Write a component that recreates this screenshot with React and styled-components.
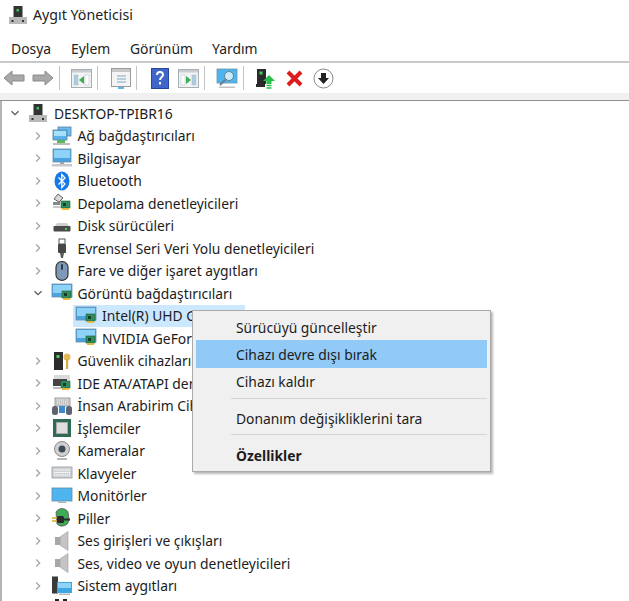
import React from "react";
import styled, { createGlobalStyle } from "styled-components";

const Global = createGlobalStyle`
  html, body { margin: 0; padding: 0; background: #fff; }
  body { font-family: "Noto Sans", "Open Sans", Arial, sans-serif; color: #1a1a1a; }
`;

const Page = styled.div`
  position: relative; width: 629px; height: 601px; overflow: hidden; background: #fff;
`;
const TitleBar = styled.div`
  display: flex; align-items: center; gap: 6px; height: 29px; padding: 0 0 1px 9px; box-sizing: content-box;
  font-size: 14.2px; color: #222;
`;
const MenuBar = styled.nav`
  display: flex; height: 33px; align-items: center; padding: 6px 0 0 11px; box-sizing: border-box;
  border-bottom: 2px solid #c9c9c9; font-size: 13.9px; color: #222;
`;
const MenuItem = styled.span` width: ${p => p.$w}px; `;
const Toolbar = styled.div`
  display: flex; align-items: center; height: 30px; background: #fff;
`;
const ToolButton = styled.div`
  width: 28.8px; height: 26px; display: flex; align-items: center; justify-content: center;
`;
const ToolSep = styled.div`
  width: 1px; height: 24px; background: #c4c4c4; margin: 0 8px 0 1px;
`;
const Strip = styled.div`
  height: 7px; background: #f0f0f0; border-bottom: 1px solid #8f8f8f;
`;
const Tree = styled.div`
  border-left: 2px solid #b5b5b5; padding-top: 1px; height: 510px;
`;
const Row = styled.div`
  display: flex; align-items: center; height: 22.5px; font-size: 13.85px; color: #1c1c1c; white-space: nowrap;
  padding-left: ${p => 4 + p.$depth * 23.5}px;
`;
const Toggle = styled.span`
  width: 17px; height: 16px; display: flex; align-items: center; justify-content: center; flex: none;
`;
const RowIcon = styled.span`
  width: 22px; margin: 0 5px 0 4px; height: 20px; display: flex; align-items: center; justify-content: center; flex: none;
`;
const ChildRow = styled.div`
  display: flex; align-items: center; height: 22.5px; font-size: 13.85px; white-space: nowrap; color: #1c1c1c;
  margin-left: 71px; width: 172px; gap: 5px; padding-left: 2px; box-sizing: border-box; width: 172px;
  background: ${p => (p.$selected ? "#cce8ff" : "transparent")};
`;
const ContextMenu = styled.div`
  position: absolute; left: 192px; top: 310px; width: 299px; height: 162px; box-sizing: border-box;
  background: #f0f0f0; border: 1px solid #a9a9a9; box-shadow: 2px 2px 2px rgba(0,0,0,.28);
  padding: 3px; font-size: 13.85px; color: #1c1c1c;
`;
const MenuRow = styled.div`
  height: ${p => p.$h}px; display: flex; align-items: center; padding-left: 40px;
  font-weight: ${p => (p.$bold ? 700 : 400)};
  background: ${p => (p.$active ? "#91c9f7" : "transparent")};
`;
const MenuSep = styled.div`
  height: 1px; margin: 3px 0 6px 35px; background: #d4d4d4;
`;

const Chevron = ({ open }) => (
  <svg width="10" height="10" viewBox="0 0 10 10" fill="none" stroke={open ? "#5a5a5a" : "#a6a6a6"} strokeWidth="1.3">
    {open ? <path d="M1.5 3.2 5 6.7 8.5 3.2" /> : <path d="M3.2 1.5 6.7 5 3.2 8.5" />}
  </svg>
);

const Svg = ({ children, w = 22, h = 20, vb = "0 0 22 20" }) => (
  <svg width={w} height={h} viewBox={vb}>{children}</svg>
);

const Tower = ({ w = 18, h = 18 }) => (
  <Svg w={w} h={h} vb="1 1 18 18">
    <rect x="5.5" y="1" width="9" height="12" fill="#333" />
    <rect x="8.5" y="4" width="2.5" height="2.5" fill="#3dc15c" />
    <rect x="1" y="12" width="18" height="7" fill="#b9b9b9" />
    <rect x="3.5" y="15" width="2" height="2" fill="#333" />
    <rect x="14" y="15" width="2" height="2" fill="#333" />
  </Svg>
);
const Screen = ({ x = 1, y = 1, w = 18, h = 12 }) => (
  <>
    <rect x={x} y={y} width={w} height={h} fill="#4aa2e0" stroke="#6d8fa8" strokeWidth=".8" />
    <rect x={x + 1} y={y + 1} width={w - 2} height={h - 5} fill="#8ed2f8" />
  </>
);
const Card = ({ x = 10, y = 9 }) => (
  <>
    <rect x={x} y={y} width="9" height="7" fill="#2f8f5b" stroke="#1c5d3c" strokeWidth=".6" />
    <rect x={x + 2} y={y + 2} width="3" height="3" fill="#1a3b2b" />
    <rect x={x + 1} y={y + 7} width="7" height="2" fill="#e9b73c" />
  </>
);
const NetIcon = () => (
  <Svg>
    <rect x="7" y="1" width="13" height="9" fill="#6bbdf0" stroke="#57809e" strokeWidth=".8" />
    <rect x="2" y="4" width="14" height="10" fill="#59b3ea" stroke="#57809e" strokeWidth=".8" />
    <rect x="3" y="5" width="12" height="5" fill="#a6e1fb" />
    <rect x="6" y="14" width="8" height="3" fill="#58b85a" />
    <rect x="2" y="17" width="17" height="2" fill="#bcbcbc" />
  </Svg>
);
const PcIcon = () => (
  <Svg>
    <Screen x={2} y={1} w={18} h={13} />
    <rect x="9" y="14" width="4" height="2" fill="#9ba6ad" />
    <rect x="1" y="16" width="20" height="2.5" fill="#c9c9c9" />
  </Svg>
);
const BtIcon = () => (
  <Svg>
    <ellipse cx="11" cy="10" rx="7.5" ry="9.5" fill="#1679ea" />
    <path d="M7.5 6.5 14 13l-3.2 3.5v-13L14 7 7.5 13.5" fill="none" stroke="#fff" strokeWidth="1.3" />
  </Svg>
);
const StorageIcon = () => (
  <Svg>
    <path d="M7 1 12 5 8 9 3 6z" fill="#d8d8d8" stroke="#666" strokeWidth="1" />
    <rect x="2" y="9" width="7" height="3" fill="#888" />
    <Card x={10} y={8} />
    <rect x="2" y="13" width="7" height="2" fill="#c9c9c9" />
  </Svg>
);
const DiskIcon = () => (
  <Svg>
    <path d="M4 10 6 7h10l2 3z" fill="#cfcfcf" />
    <rect x="2.5" y="10" width="17" height="5.5" rx="1" fill="#4a4a4a" />
    <rect x="14" y="12" width="2" height="2" fill="#46c75a" />
  </Svg>
);
const UsbIcon = () => (
  <Svg>
    <rect x="8" y="1" width="6" height="5" fill="#fff" stroke="#555" />
    <rect x="7" y="6" width="8" height="9" rx="1" fill="#474747" />
    <path d="M9 15h4l-1 5h-2z" fill="#5a5a5a" />
  </Svg>
);
const MouseIcon = () => (
  <Svg>
    <rect x="5" y="0.7" width="12" height="18.6" rx="5.5" fill="#7f9ab8" stroke="#333" strokeWidth="1.2" />
    <rect x="10" y="3" width="2" height="6" rx="1" fill="#2f3e4f" />
  </Svg>
);
const DisplayIcon = () => (
  <Svg>
    <Screen x={1} y={1} w={20} h={13} />
    <Card x={11} y={8} />
  </Svg>
);
const SecIcon = () => (
  <Svg>
    <rect x="3" y="1" width="9" height="18" fill="#2b2b2b" />
    <rect x="5.5" y="4" width="3" height="3" fill="#49d05f" />
    <circle cx="16" cy="6" r="3.5" fill="#e1b95a" />
    <rect x="15" y="8" width="2.2" height="10" fill="#d6aa47" />
  </Svg>
);
const IdeIcon = () => (
  <Svg>
    <rect x="3" y="2" width="16" height="5" fill="#dadada" />
    <rect x="2" y="6" width="14" height="7" fill="#444" />
    <Card x={10} y={8} />
    <rect x="2" y="14" width="8" height="2" fill="#bbb" />
  </Svg>
);
const HidIcon = () => (
  <Svg>
    <rect x="4" y="2" width="15" height="8" fill="#dcdcdc" stroke="#888" strokeWidth=".8" />
    <path d="M5 4h13M5 6h13M5 8h13" stroke="#9c9c9c" strokeWidth=".8" strokeDasharray="1 1" />
    <rect x="1" y="10" width="6" height="9" rx="2.5" fill="#5d6470" />
    <rect x="15" y="10" width="6" height="9" rx="2.5" fill="#5d6470" />
    <rect x="8" y="10" width="6" height="7" fill="#3b8ad0" />
  </Svg>
);
const CpuIcon = () => (
  <Svg>
    <rect x="2" y="1" width="18" height="18" fill="#2f6b53" />
    <rect x="5.5" y="4.5" width="11" height="11" fill="#dfdfdf" stroke="#a9a9a9" />
  </Svg>
);
const CamIcon = () => (
  <Svg>
    <circle cx="11" cy="8" r="7.5" fill="#cfcfcf" stroke="#8b8b8b" />
    <circle cx="11" cy="8" r="3.5" fill="#3d4a57" />
    <rect x="6" y="17" width="10" height="2" fill="#b8b8b8" />
  </Svg>
);
const KbIcon = () => (
  <Svg>
    <rect x="1" y="4" width="20" height="11" fill="#cfd3d6" stroke="#9a9a9a" strokeWidth=".8" />
    <path d="M3 7h16M3 9.5h16M3 12h16" stroke="#fff" strokeWidth="1.1" strokeDasharray="1.4 .7" />
  </Svg>
);
const MonitorIcon = () => (
  <Svg>
    <rect x="1" y="2" width="20" height="13" fill="#4fb5ee" stroke="#5f8aa6" strokeWidth=".8" />
    <rect x="7" y="15.5" width="8" height="1.5" fill="#aeb5ba" />
  </Svg>
);
const BatteryIcon = () => (
  <Svg>
    <path d="M5 4a7 7 0 0 1 12 0l1 8a7 7 0 0 1-12 4z" fill="#3eab57" stroke="#555" strokeWidth=".8" />
    <path d="M1 10h5M1 13h5" stroke="#d6a92f" strokeWidth="1.6" />
    <rect x="6" y="8" width="7" height="7" rx="1.5" fill="#2a2a2a" />
    <path d="M13 11.5h6" stroke="#2a2a2a" strokeWidth="2" />
  </Svg>
);
const SpeakerIcon = () => (
  <Svg>
    <rect x="4" y="6" width="5" height="8" fill="#a8a8a8" />
    <path d="M9 6 17 0.5v19L9 14z" fill="#c4c4c4" stroke="#9a9a9a" strokeWidth=".6" />
  </Svg>
);
const SysIcon = () => (
  <Svg>
    <rect x="1" y="0.5" width="6" height="17" fill="#3a3a3a" />
    <rect x="6" y="6" width="15" height="11" fill="#3fa6e4" />
    <rect x="7" y="7" width="13" height="5" fill="#8fd4f8" />
    <rect x="8" y="17.5" width="11" height="1.5" fill="#b8b8b8" />
  </Svg>
);
const PrintIcon = () => (
  <Svg>
    <rect x="4" y="1" width="4" height="6" fill="#222" />
    <rect x="12" y="1" width="4" height="6" fill="#222" />
  </Svg>
);

const ToolWin = ({ dir }) => (
  <svg width="21" height="19" viewBox="0 0 21 19">
    <rect x=".5" y=".5" width="20" height="18" fill="#f2f3f4" stroke="#a8adb1" />
    <rect x="1" y="1" width="19" height="2.5" fill="#c9ccd0" />
    <rect x="3" y="6" width="4" height="10" fill={dir === "l" ? "#a9cde3" : "#fff"} stroke="#b4bcc2" strokeWidth=".5" />
    <rect x="14" y="6" width="4" height="10" fill={dir === "r" ? "#a9cde3" : "#fff"} stroke="#b4bcc2" strokeWidth=".5" />
    <path d={dir === "l" ? "M13 7v8l-5-4z" : "M8 7v8l5-4z"} fill="#3cae54" />
  </svg>
);

const tree = [
  ["Ağ bağdaştırıcıları", NetIcon],
  ["Bilgisayar", PcIcon],
  ["Bluetooth", BtIcon],
  ["Depolama denetleyicileri", StorageIcon],
  ["Disk sürücüleri", DiskIcon],
  ["Evrensel Seri Veri Yolu denetleyicileri", UsbIcon],
  ["Fare ve diğer işaret aygıtları", MouseIcon],
];
const treeAfter = [
  ["Güvenlik cihazları", SecIcon],
  ["IDE ATA/ATAPI denetleyicileri", IdeIcon],
  ["İnsan Arabirim Cihazları", HidIcon],
  ["İşlemciler", CpuIcon],
  ["Kameralar", CamIcon],
  ["Klavyeler", KbIcon],
  ["Monitörler", MonitorIcon],
  ["Piller", BatteryIcon],
  ["Ses girişleri ve çıkışları", SpeakerIcon],
  ["Ses, video ve oyun denetleyicileri", SpeakerIcon],
  ["Sistem aygıtları", SysIcon],
  ["", PrintIcon],
];

const Node = ({ label, Icon, depth = 1, open }) => (
  <Row $depth={depth}>
    <Toggle><Chevron open={open} /></Toggle>
    <RowIcon><Icon /></RowIcon>
    <span>{label}</span>
  </Row>
);

export default function App() {
  return (
    <Page>
      <Global />
      <TitleBar><Tower />Aygıt Yöneticisi</TitleBar>
      <MenuBar>
        <MenuItem $w={60}>Dosya</MenuItem>
        <MenuItem $w={59}>Eylem</MenuItem>
        <MenuItem $w={82}>Görünüm</MenuItem>
        <MenuItem $w={60}>Yardım</MenuItem>
      </MenuBar>
      <Toolbar>
        <ToolButton>
          <svg width="22" height="16" viewBox="0 0 22 16"><path d="M1 8 9 1v4h12v6H9v4z" fill="#a8a8a8" stroke="#8a8a8a" /></svg>
        </ToolButton>
        <ToolButton>
          <svg width="22" height="16" viewBox="0 0 22 16"><path d="M21 8 13 1v4H1v6h12v4z" fill="#a8a8a8" stroke="#8a8a8a" /></svg>
        </ToolButton>
        <ToolSep />
        <ToolButton><ToolWin dir="l" /></ToolButton>
        <ToolSep />
        <ToolButton>
          <svg width="20" height="21" viewBox="0 0 20 21">
            <rect x=".5" y=".5" width="19" height="18" fill="#f4f4f4" stroke="#9b9b9b" />
            <rect x="1" y="1" width="18" height="3" fill="#c8c8c8" />
            <path d="M6 8h9M6 11h9M6 14h9" stroke="#7da7c4" />
            <rect x="7" y="19" width="6" height="2" fill="#5db5e8" />
          </svg>
        </ToolButton>
        <ToolSep />
        <ToolButton>
          <svg width="18" height="21" viewBox="0 0 18 21">
            <rect width="18" height="21" fill="#24469c" />
            <rect x="1" y="1" width="16" height="19" fill="#3f66c8" />
            <path d="M6 7c0-4 6-4 6 0 0 2-3 2-3 5" fill="none" stroke="#fff" strokeWidth="2" />
            <rect x="8" y="14" width="2" height="2.4" fill="#fff" />
          </svg>
        </ToolButton>
        <ToolButton><ToolWin dir="r" /></ToolButton>
        <ToolSep />
        <ToolButton>
          <svg width="22" height="21" viewBox="0 0 22 21">
            <rect x="1" y="1" width="20" height="14" fill="#4eb4ee" stroke="#6d93ad" strokeWidth=".8" />
            <circle cx="13" cy="8" r="4.5" fill="#c7ebfb" stroke="#6f7d88" />
            <path d="M9.5 11.5 4 17" stroke="#6f7d88" strokeWidth="2" />
            <rect x="3" y="18.5" width="16" height="1.5" fill="#c2c2c2" />
          </svg>
        </ToolButton>
        <ToolSep />
        <ToolButton>
          <svg width="19" height="21" viewBox="0 0 19 21">
            <rect x="1" y="1" width="9" height="15" fill="#2a2a2a" />
            <rect x="3.5" y="3.5" width="3" height="3" fill="#45cf5d" />
            <rect x="0" y="16" width="9" height="3" fill="#2a2a2a" />
            <path d="M13 7 19 13h-3.5v3h-5v-3H7z" fill="#27bd4a" />
            <path d="M10.5 17.5h5M10.5 20h5" stroke="#27bd4a" strokeWidth="1.4" />
          </svg>
        </ToolButton>
        <ToolButton>
          <svg width="17" height="17" viewBox="0 0 17 17"><path d="M2 2 15 15M15 2 2 15" stroke="#dd1c1c" strokeWidth="4" /></svg>
        </ToolButton>
        <ToolButton>
          <svg width="21" height="21" viewBox="0 0 21 21">
            <circle cx="10.5" cy="10.5" r="9.5" fill="#fff" stroke="#8a8a8a" />
            <path d="M8 5h5v5h3l-5.5 6L5 10h3z" fill="#222" />
          </svg>
        </ToolButton>
      </Toolbar>
      <Strip />
      <Tree>
        <Row $depth={0}>
          <Toggle><Chevron open /></Toggle>
          <RowIcon><Tower /></RowIcon>
          <span>DESKTOP-TPIBR16</span>
        </Row>
        {tree.map(([label, Icon]) => <Node key={label} label={label} Icon={Icon} />)}
        <Node label="Görüntü bağdaştırıcıları" Icon={DisplayIcon} open />
        <ChildRow $selected><DisplayIcon />Intel(R) UHD Graphics</ChildRow>
        <ChildRow><DisplayIcon />NVIDIA GeForce</ChildRow>
        {treeAfter.map(([label, Icon], i) => <Node key={i} label={label} Icon={Icon} />)}
      </Tree>
      <ContextMenu>
        <MenuRow $h={26}>Sürücüyü güncelleştir</MenuRow>
        <MenuRow $h={28} $active>Cihazı devre dışı bırak</MenuRow>
        <MenuRow $h={27}>Cihazı kaldır</MenuRow>
        <MenuSep />
        <MenuRow $h={26}>Donanım değişikliklerini tara</MenuRow>
        <MenuSep />
        <MenuRow $h={28} $bold>Özellikler</MenuRow>
      </ContextMenu>
    </Page>
  );
}
